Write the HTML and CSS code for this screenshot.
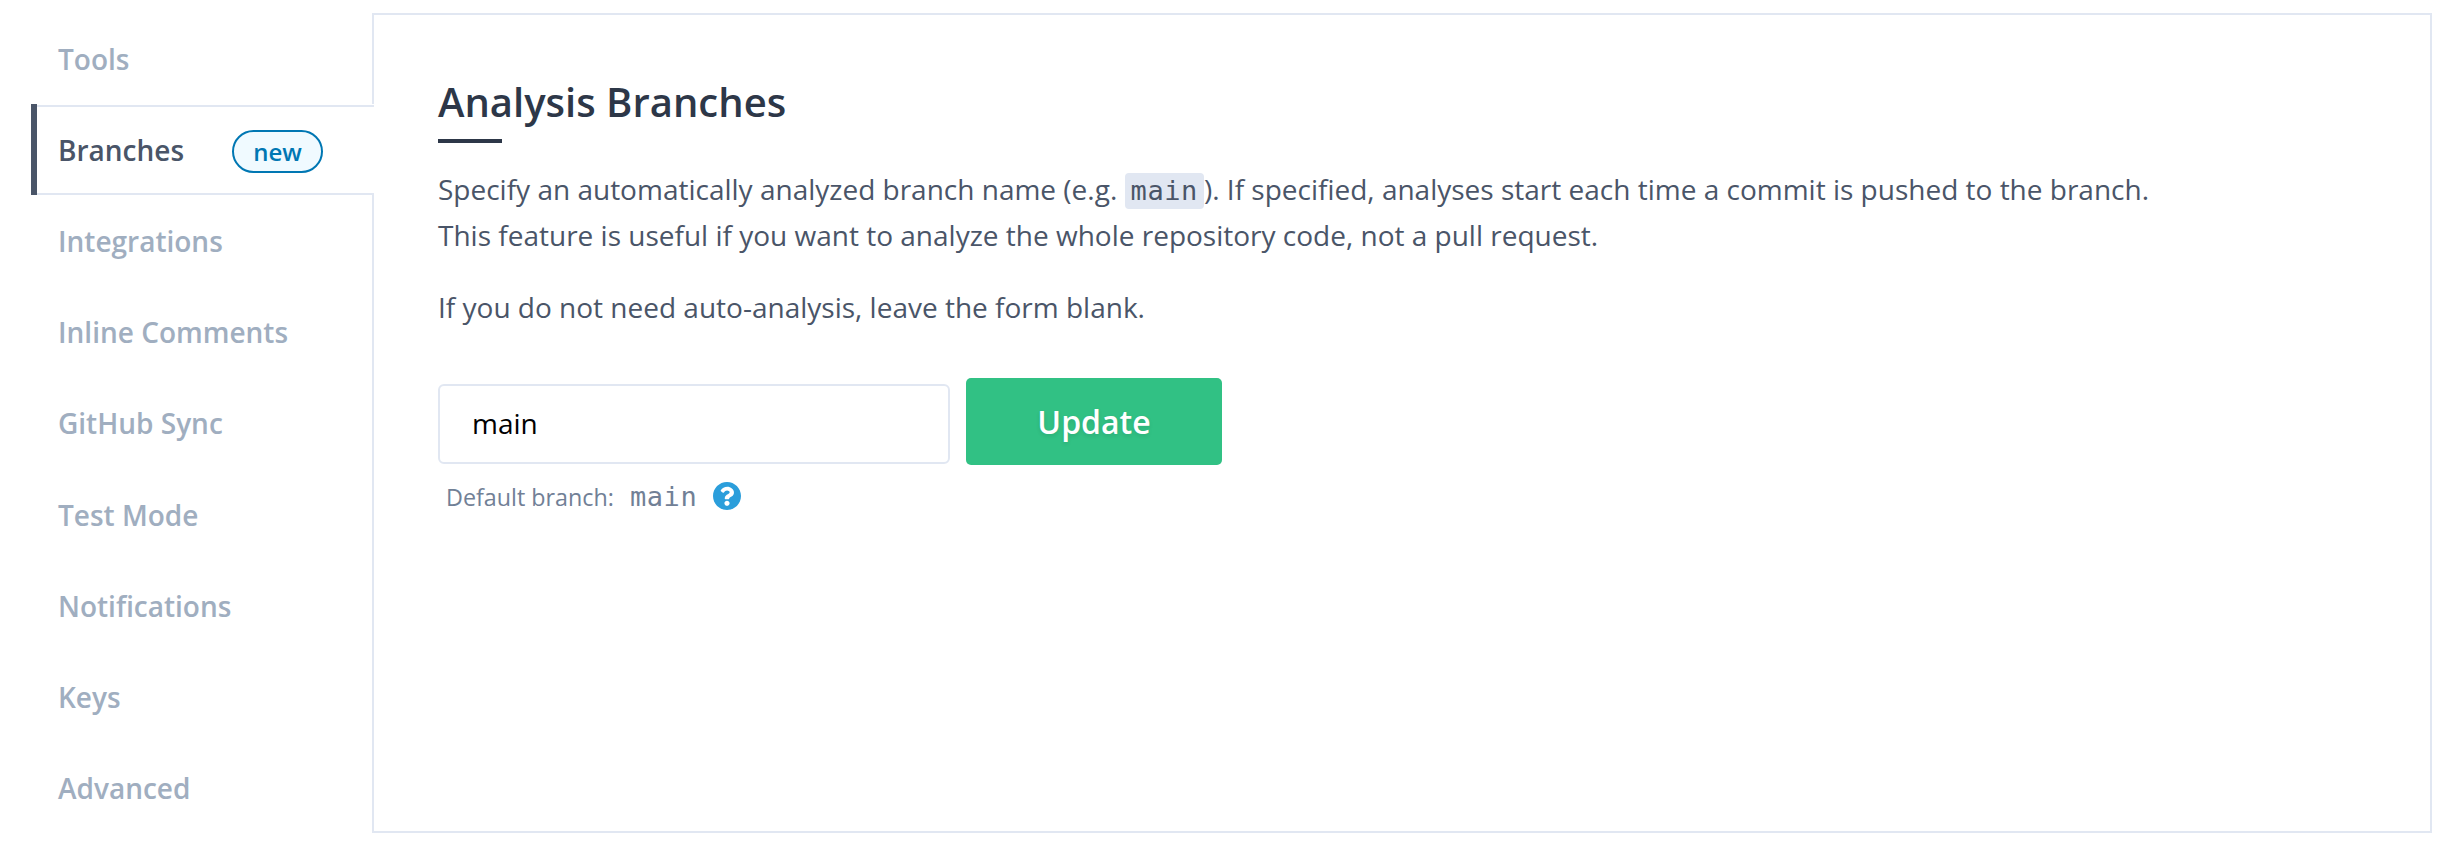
FILE: index.html
```html
<!DOCTYPE html>
<html lang="en">
<head>
<meta charset="utf-8">
<title>Analysis Branches</title>
<link rel="stylesheet" href="styles.css">
</head>
<body>
<div class="settings">
  <nav class="tabs">
    <a class="tab">Tools</a>
    <a class="tab active">Branches <span class="badge">new</span></a>
    <a class="tab">Integrations</a>
    <a class="tab">Inline Comments</a>
    <a class="tab">GitHub Sync</a>
    <a class="tab">Test Mode</a>
    <a class="tab">Notifications</a>
    <a class="tab">Keys</a>
    <a class="tab">Advanced</a>
  </nav>
  <main class="panel">
    <h1 class="title">Analysis Branches</h1>
    <p class="text">Specify an automatically analyzed branch name (e.g. <code class="code">main</code>). If specified, analyses start each time a commit is pushed to the branch.<br>This feature is useful if you want to analyze the whole repository code, not a pull request.</p>
    <p class="text">If you do not need auto-analysis, leave the form blank.</p>
    <form class="form">
      <input class="input" type="text" value="main">
      <button class="button" type="button">Update</button>
    </form>
    <div class="hint">
      <span class="hint-label">Default branch:</span>
      <code class="hint-code">main</code>
      <svg class="help" viewBox="8 8 496 496"><path fill="currentColor" d="M504 256c0 136.997-111.043 248-248 248S8 392.997 8 256C8 119.083 119.043 8 256 8s248 111.083 248 248zM262.655 90c-54.497 0-89.255 22.957-116.549 63.758-3.536 5.286-2.353 12.415 2.715 16.258l34.699 26.31c5.205 3.947 12.621 3.008 16.665-2.122 17.864-22.658 30.113-35.797 57.303-35.797 20.429 0 45.698 13.148 45.698 32.958 0 14.976-12.363 22.667-32.534 33.976C247.128 238.528 216 254.941 216 296v4c0 6.627 5.373 12 12 12h56c6.627 0 12-5.373 12-12v-1.333c0-28.462 83.186-29.647 83.186-106.667 0-58.002-60.165-102-116.531-102zM256 338c-25.365 0-46 20.635-46 46 0 25.364 20.635 46 46 46s46-20.636 46-46c0-25.365-20.635-46-46-46z"/></svg>
    </div>
  </main>
</div>
</body>
</html>
```
FILE: styles.css
```css
* { box-sizing: border-box; }
body {
  margin: 0;
  background: #fff;
  color: #4a5568;
  font-family: "Open Sans", sans-serif;
  font-size: 28px;
}
.settings {
  display: grid;
  grid-template-columns: 341px 2060px;
  height: 852px;
  padding: 13px 20px 19px 31px;
}
.tabs {
  display: grid;
  grid-template-rows: repeat(9, 1fr);
  z-index: 1;
}
.tab {
  display: flex;
  align-items: center;
  padding: 1px 0 0 27px;
  color: #a0aec0;
  font-weight: 600;
}
.tab.active {
  margin-right: -2px;
  padding: 1px 51px 0 21px;
  justify-content: space-between;
  color: #4a5568;
  background:
    linear-gradient(#e1e7f2, #e1e7f2) 0 1px / 100% 2px no-repeat,
    linear-gradient(#e1e7f2, #e1e7f2) 0 100% / 100% 2px no-repeat,
    #fff;
  border-left: 6px solid #4a5568;
}
.badge {
  display: flex;
  align-items: center;
  justify-content: center;
  width: 91px;
  height: 43px;
  margin-top: 3px;
  border: 2px solid #0077b3;
  border-radius: 22px;
  background: #f0faff;
  color: #0077b3;
  font-size: 24px;
}
.panel {
  padding: 53px 64px;
  border: 2px solid #e1e7f2;
}
.title {
  margin: 0 0 23px;
  color: #2d3748;
  font-size: 40px;
  font-weight: 600;
  line-height: 67px;
}
.title::after {
  content: "";
  display: block;
  width: 64px;
  height: 4px;
  margin-top: 4px;
  background: #2d3748;
}
.text {
  margin: 0 0 26px;
  line-height: 46px;
  white-space: nowrap;
}
.code {
  padding: 2px 6px 3px;
  border-radius: 4px;
  background: #e1e7f2;
  font-family: "DejaVu Sans Mono", monospace;
  font-size: 27px;
  letter-spacing: .6px;
  line-height: 1;
}
.form {
  display: flex;
  align-items: flex-end;
  gap: 16px;
  margin-top: 48px;
}
.input {
  width: 512px;
  height: 80px;
  margin: 0 0 1px;
  padding: 0 32px 2px;
  border: 2px solid #e1e7f2;
  border-radius: 6px;
  background: #fff;
  color: #000;
  font: 28px "Open Sans", sans-serif;
}
.button {
  width: 256px;
  height: 87px;
  margin: 0;
  padding: 0;
  border: 0;
  border-radius: 5px;
  background: #31c184;
  color: #fff;
  font: 600 32px "Open Sans", sans-serif;
  text-shadow: 0 2px 4px rgba(0, 0, 0, .1);
}
.hint {
  display: flex;
  align-items: center;
  height: 34px;
  margin: 14px 0 0 8px;
  color: #718096;
  font-size: 23.3px;
}
.hint-label {
  padding-top: 1px;
}
.hint-code {
  margin: 0 16px;
  padding-top: 1px;
  font-family: "DejaVu Sans Mono", monospace;
  font-size: 27px;
  letter-spacing: .6px;
}
.help {
  width: 28px;
  height: 28px;
  color: #2b9edb;
}
```
